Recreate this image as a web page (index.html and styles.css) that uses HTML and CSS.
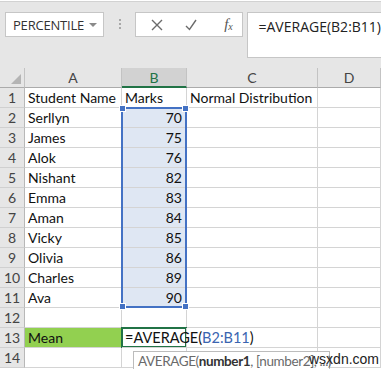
FILE: index.html
```html
<!DOCTYPE html>
<html lang="en">
<head>
  <meta charset="UTF-8" />
  <title>Normal Distribution - Excel</title>
  <link rel="stylesheet" href="styles.css">
</head>
<body>
<div class="page">

  <header class="toolbar">
    <div class="namebox">
      <span>PERCENTILE</span>
      <span class="caret"></span>
    </div>
    <div class="grip"><i></i><i></i><i></i></div>
    <div class="fx-buttons">
      <svg class="btn-x" width="12" height="12" viewBox="0 0 12 12"><path d="M1 1 L11 11 M11 1 L1 11" stroke="#6b6b6b" stroke-width="1.4" fill="none"/></svg>
      <svg class="btn-ok" width="12" height="12" viewBox="0 0 12 12"><path d="M1 7 L4.5 10.5 L11 1" stroke="#6b6b6b" stroke-width="1.4" fill="none"/></svg>
      <span class="fx">f<sub>x</sub></span>
    </div>
    <div class="formula">=AVERAGE(B2:B11)</div>
  </header>

  <div class="sheet">
    <div class="hdr corner"></div>
    <div class="hdr">A</div>
    <div class="hdr active-col">B</div>
    <div class="hdr">C</div>
    <div class="hdr">D</div>

    <div class="rownum">1</div><div class="cell">Student Name</div><div class="cell">Marks</div><div class="cell">Normal Distribution</div><div class="cell"></div>
    <div class="rownum">2</div><div class="cell">Serllyn</div><div class="cell num sel">70</div><div class="cell"></div><div class="cell"></div>
    <div class="rownum">3</div><div class="cell">James</div><div class="cell num sel">75</div><div class="cell"></div><div class="cell"></div>
    <div class="rownum">4</div><div class="cell">Alok</div><div class="cell num sel">76</div><div class="cell"></div><div class="cell"></div>
    <div class="rownum">5</div><div class="cell">Nishant</div><div class="cell num sel">82</div><div class="cell"></div><div class="cell"></div>
    <div class="rownum">6</div><div class="cell">Emma</div><div class="cell num sel">83</div><div class="cell"></div><div class="cell"></div>
    <div class="rownum">7</div><div class="cell">Aman</div><div class="cell num sel">84</div><div class="cell"></div><div class="cell"></div>
    <div class="rownum">8</div><div class="cell">Vicky</div><div class="cell num sel">85</div><div class="cell"></div><div class="cell"></div>
    <div class="rownum">9</div><div class="cell">Olivia</div><div class="cell num sel">86</div><div class="cell"></div><div class="cell"></div>
    <div class="rownum">10</div><div class="cell">Charles</div><div class="cell num sel">89</div><div class="cell"></div><div class="cell"></div>
    <div class="rownum">11</div><div class="cell">Ava</div><div class="cell num sel">90</div><div class="cell"></div><div class="cell"></div>
    <div class="rownum">12</div><div class="cell"></div><div class="cell"></div><div class="cell"></div><div class="cell"></div>
    <div class="rownum">13</div><div class="cell mean">Mean</div><div class="cell editing">=AVERAGE(<span class="ref">B2:B11</span>)</div><div class="cell"></div><div class="cell"></div>
    <div class="rownum">14</div><div class="cell"></div><div class="cell"></div><div class="cell"></div><div class="cell"></div>
  </div>

  <!-- overlays: range selection, edit box, tooltip -->
  <div class="selection">
    <span class="handle tl"></span><span class="handle tr"></span>
    <span class="handle bl"></span><span class="handle br"></span>
  </div>
  <div class="edit-box"></div>
  <div class="tooltip">AVERAGE(<b>number1</b>, [number2], ...)</div>
  <div class="watermark">wsxdn.com</div>

</div>
</body>
</html>
```

FILE: styles.css
```css
body {
  margin: 0;
  background: #ffffff;
  font-family: 'Lato', 'Liberation Sans', sans-serif;
  color: #222;
}

.page {
  position: relative;
  width: 381px;
  height: 369px;
  overflow: hidden;
}

.toolbar {
  display: flex;
  align-items: flex-start;
  height: 67px;
  box-sizing: border-box;
  margin-top: 1px;
  padding: 10px 0 0 5px;
  background: #e6e6e6;
  border-top: 1px solid #d2d2d2;
}

.namebox {
  display: flex;
  align-items: center;
  justify-content: space-between;
  width: 101px;
  height: 25px;
  box-sizing: border-box;
  padding: 0 6px 0 7px;
  background: #fff;
  border: 1px solid #c6c6c6;
  font-family: 'Open Sans', sans-serif;
  font-size: 13px;
  letter-spacing: -0.2px;
  color: #333;
}
.namebox .caret {
  width: 0;
  height: 0;
  border-left: 4px solid transparent;
  border-right: 4px solid transparent;
  border-top: 4px solid #8a8a8a;
}

.grip {
  display: flex;
  flex-direction: column;
  gap: 2px;
  margin: 7px 0 0 15px;
  width: 16px;
}
.grip i {
  display: block;
  width: 2px;
  height: 2px;
  background: #a8a8a8;
}

.fx-buttons {
  display: flex;
  align-items: center;
  width: 109px;
  height: 25px;
  box-sizing: border-box;
  padding-left: 15px;
  background: #fff;
  border: 1px solid #c6c6c6;
}
.fx-buttons .btn-ok {
  margin-left: 22px;
}
.fx-buttons .fx {
  margin-left: 27px;
  font-family: 'Liberation Serif', serif;
  font-style: italic;
  font-size: 15px;
  color: #555;
}
.fx-buttons .fx sub {
  font-size: 10px;
  vertical-align: -1px;
}

.formula {
  flex: 1;
  height: 46px;
  box-sizing: border-box;
  margin-left: 4px;
  padding: 4px 0 0 11px;
  background: #fff;
  border: 1px solid #c6c6c6;
  border-right: none;
  font-family: 'Open Sans', sans-serif;
  font-size: 14px;
  color: #222;
  white-space: nowrap;
}

.sheet {
  display: grid;
  grid-template-columns: 25px 97px 65px 131px 63px;
  grid-auto-rows: 20px;
}

.sheet > div {
  box-sizing: border-box;
  border-right: 1px solid #d4d4d4;
  border-bottom: 1px solid #d4d4d4;
  font-size: 14px;
  line-height: 19px;
  white-space: nowrap;
}

.sheet .hdr {
  background: #e6e6e6;
  border-right-color: #c3c3c3;
  border-bottom-color: #ababab;
  text-align: center;
  color: #444;
}
.sheet .hdr.active-col {
  background: #d2d2d2;
  color: #217346;
  border-bottom: 2px solid #217346;
}
.sheet .corner {
  position: relative;
}
.sheet .corner::after {
  content: "";
  position: absolute;
  right: 3px;
  bottom: 3px;
  border-left: 10px solid transparent;
  border-bottom: 10px solid #b4b4b4;
}

.sheet .rownum {
  background: #e6e6e6;
  border-right-color: #b8b8b8;
  border-bottom-color: #d0d0d0;
  text-align: center;
  color: #444;
}

.sheet .cell {
  padding: 0 3px;
  color: #111;
}
.sheet .cell.num {
  text-align: right;
  padding-right: 4px;
}
.sheet .cell.sel {
  background: #dfe7f3;
}
.sheet .cell.mean {
  background: #92d050;
}
.sheet .cell.editing {
  position: relative;
  z-index: 2;
  overflow: visible;
  font-size: 14.5px;
}
.ref {
  color: #3a64b0;
}

.selection {
  position: absolute;
  left: 121px;
  top: 107px;
  width: 66px;
  height: 201px;
  box-sizing: border-box;
  border: 2px solid #4472c4;
}
.handle {
  position: absolute;
  width: 5px;
  height: 5px;
  background: #4472c4;
  border: 1px solid #fff;
}
.handle.tl { left: -4px; top: -4px; }
.handle.tr { right: -4px; top: -4px; }
.handle.bl { left: -4px; bottom: -4px; }
.handle.br { right: -4px; bottom: -4px; }

.edit-box {
  position: absolute;
  left: 121px;
  top: 327px;
  width: 66px;
  height: 21px;
  box-sizing: border-box;
  border: 2px solid #217346;
}

.tooltip {
  position: absolute;
  left: 133px;
  top: 351px;
  width: 197px;
  height: 21px;
  box-sizing: border-box;
  padding: 0 0 0 4px;
  background: #fff;
  border: 1px solid #bcbcbc;
  font-size: 13.5px;
  letter-spacing: -0.4px;
  line-height: 19px;
  color: #6a6a6a;
  white-space: nowrap;
}
.tooltip b {
  color: #333;
}

.watermark {
  position: absolute;
  left: 309px;
  top: 351px;
  font-family: 'Liberation Sans', sans-serif;
  font-size: 14px;
  color: #222;
}
```
